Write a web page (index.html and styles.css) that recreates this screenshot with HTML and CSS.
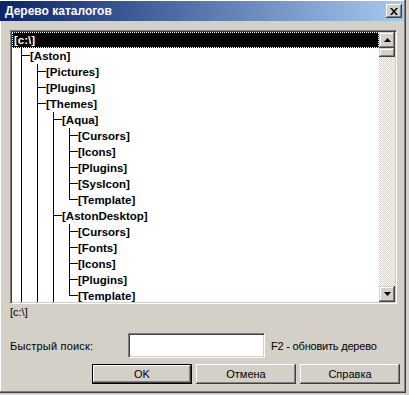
FILE: index.html
```html
<html lang="ru"><head>
    <meta charset="UTF-8">
    <title>Дерево каталогов</title>
    <link rel="stylesheet" href="styles.css">
</head>
<body>
    <!-- Dialog window -->
    <div id="dialog">
        <div id="titlebar">
            <span id="title">Дерево каталогов</span>
            <div id="close-btn">
                <svg width="8" height="7" viewBox="0 0 8 7"><path d="M0 0h2l2 2.5L6 0h2L5 3.5 8 7H6L4 4.5 2 7H0l3-3.5z" fill="#000"/></svg>
            </div>
        </div>

        <!-- Tree view with scrollbar -->
        <div id="tree-panel">
            <div id="tree">
                <div class="row root"><span class="label">[c:\]</span></div>
                <div class="row"><i class="t"></i><span class="label">[Aston]</span></div>
                <div class="row"><i class="g"></i><i class="t"></i><span class="label">[Pictures]</span></div>
                <div class="row"><i class="g"></i><i class="t"></i><span class="label">[Plugins]</span></div>
                <div class="row"><i class="g"></i><i class="t"></i><span class="label">[Themes]</span></div>
                <div class="row"><i class="g"></i><i class="g"></i><i class="t"></i><span class="label">[Aqua]</span></div>
                <div class="row"><i class="g"></i><i class="g"></i><i class="g"></i><i class="t"></i><span class="label">[Cursors]</span></div>
                <div class="row"><i class="g"></i><i class="g"></i><i class="g"></i><i class="t"></i><span class="label">[Icons]</span></div>
                <div class="row"><i class="g"></i><i class="g"></i><i class="g"></i><i class="t"></i><span class="label">[Plugins]</span></div>
                <div class="row"><i class="g"></i><i class="g"></i><i class="g"></i><i class="t"></i><span class="label">[SysIcon]</span></div>
                <div class="row"><i class="g"></i><i class="g"></i><i class="g"></i><i class="l"></i><span class="label">[Template]</span></div>
                <div class="row"><i class="g"></i><i class="g"></i><i class="t"></i><span class="label">[AstonDesktop]</span></div>
                <div class="row"><i class="g"></i><i class="g"></i><i class="g"></i><i class="t"></i><span class="label">[Cursors]</span></div>
                <div class="row"><i class="g"></i><i class="g"></i><i class="g"></i><i class="t"></i><span class="label">[Fonts]</span></div>
                <div class="row"><i class="g"></i><i class="g"></i><i class="g"></i><i class="t"></i><span class="label">[Icons]</span></div>
                <div class="row"><i class="g"></i><i class="g"></i><i class="g"></i><i class="t"></i><span class="label">[Plugins]</span></div>
                <div class="row"><i class="g"></i><i class="g"></i><i class="g"></i><i class="l"></i><span class="label">[Template]</span></div>
            </div>
            <div id="scrollbar">
                <div class="sb-btn"><svg width="7" height="4" viewBox="0 0 7 4"><path d="M3.5 0L7 4H0z" fill="#000"/></svg></div>
                <div class="sb-thumb"></div>
                <div class="sb-track"></div>
                <div class="sb-btn"><svg width="7" height="4" viewBox="0 0 7 4"><path d="M0 0h7L3.5 4z" fill="#000"/></svg></div>
            </div>
        </div>

        <div id="status">[c:\]</div>

        <!-- Quick search -->
        <div id="search-row">
            <span id="search-label">Быстрый поиск:</span>
            <div id="search-input"></div>
            <span id="search-hint">F2 - обновить дерево</span>
        </div>

        <div id="buttons">
            <div class="btn default">OK</div>
            <div class="btn">Отмена</div>
            <div class="btn">Справка</div>
        </div>
    </div>
</body></html>
```

FILE: styles.css
```css
* {
    box-sizing: border-box;
    margin: 0;
    padding: 0;
}

body {
    width: 409px;
    height: 395px;
    overflow: hidden;
    background: #d4d0c8;
    font-family: "Liberation Sans", Arial, sans-serif;
    font-size: 11px;
    color: #000;
}

#dialog {
    width: 406px;
    height: 393px;
    padding-top: 1px;
    border-right: 1px solid #404040;
    border-bottom: 1px solid #404040;
    box-shadow: inset -1px -1px #808080, inset 1px 1px #fff;
    display: flex;
    flex-direction: column;
}

/* Title bar */
#titlebar {
    height: 20px;
    margin-right: 1px;
    padding: 0 2px 0 5px;
    display: flex;
    align-items: center;
    justify-content: space-between;
    background: linear-gradient(to right, #0a246a, #a6caf0);
    color: #fff;
    font-size: 12px;
    font-weight: bold;
}

#close-btn {
    width: 16px;
    height: 14px;
    display: flex;
    align-items: center;
    justify-content: center;
    background: #d4d0c8;
    box-shadow: inset -1px -1px #404040, inset 1px 1px #fff, inset -2px -2px #808080;
}

/* Tree panel */
#tree-panel {
    margin: 9px 0 0 10px;
    width: 387px;
    height: 274px;
    padding: 1px;
    display: flex;
    border: 1px solid;
    border-color: #808080 #fff #fff #808080;
    box-shadow: inset 1px 1px #404040, inset -1px -1px #d4d0c8;
}

#tree {
    flex: 1;
    overflow: hidden;
    background: #fff;
}

.row {
    height: 16px;
    display: flex;
    font-size: 11.5px;
    font-weight: bold;
}

.row i {
    width: 16px;
    flex-shrink: 0;
}

.row .g {
    background: linear-gradient(#000, #000) 9px 0 / 1px 100% no-repeat;
}

.row .t {
    background:
        linear-gradient(#000, #000) 9px 0 / 1px 100% no-repeat,
        linear-gradient(#000, #000) 9px 7px / 7px 1px no-repeat;
}

.row .l {
    background:
        linear-gradient(#000, #000) 9px 0 / 1px 8px no-repeat,
        linear-gradient(#000, #000) 9px 7px / 7px 1px no-repeat;
}

.label {
    padding-left: 2px;
    line-height: 16px;
    white-space: nowrap;
    background: linear-gradient(#000, #000) 0 7px / 2px 1px no-repeat;
}

.root .label {
    flex: 1;
    background: #000;
    color: #fff;
    outline: 1px dotted #fff;
    outline-offset: -1px;
}

/* Scrollbar */
#scrollbar {
    width: 16px;
    display: flex;
    flex-direction: column;
}

.sb-btn, .sb-thumb {
    background: #d4d0c8;
    box-shadow: inset -1px -1px #404040, inset 1px 1px #d4d0c8, inset -2px -2px #808080, inset 2px 2px #fff;
}

.sb-btn {
    height: 16px;
    display: flex;
    align-items: center;
    justify-content: center;
}

.sb-thumb {
    height: 9px;
}

.sb-track {
    flex: 1;
    background: repeating-conic-gradient(#fff 0 25%, #d4d0c8 0 50%) 0 0 / 2px 2px;
}

#status {
    margin: 2px 0 0 10px;
    line-height: 13px;
}

/* Quick search */
#search-row {
    margin: 14px 0 0 10px;
    display: flex;
    align-items: center;
}

#search-label {
    width: 118px;
    letter-spacing: 0.2px;
}

#search-input {
    width: 137px;
    height: 25px;
    background: #fff;
    border: 1px solid;
    border-color: #808080 #fff #fff #808080;
    box-shadow: inset 1px 1px #404040, inset -1px -1px #d4d0c8;
}

#search-hint {
    margin-left: 6px;
    letter-spacing: -0.2px;
}

/* Buttons */
#buttons {
    margin: 6px 0 0 92px;
    display: flex;
    gap: 4px;
}

.btn {
    width: 100px;
    height: 20px;
    display: flex;
    align-items: center;
    justify-content: center;
    background: #d4d0c8;
    box-shadow: inset -1px -1px #404040, inset 1px 1px #fff, inset -2px -2px #808080;
}

.btn.default {
    border: 1px solid #000;
}
```
